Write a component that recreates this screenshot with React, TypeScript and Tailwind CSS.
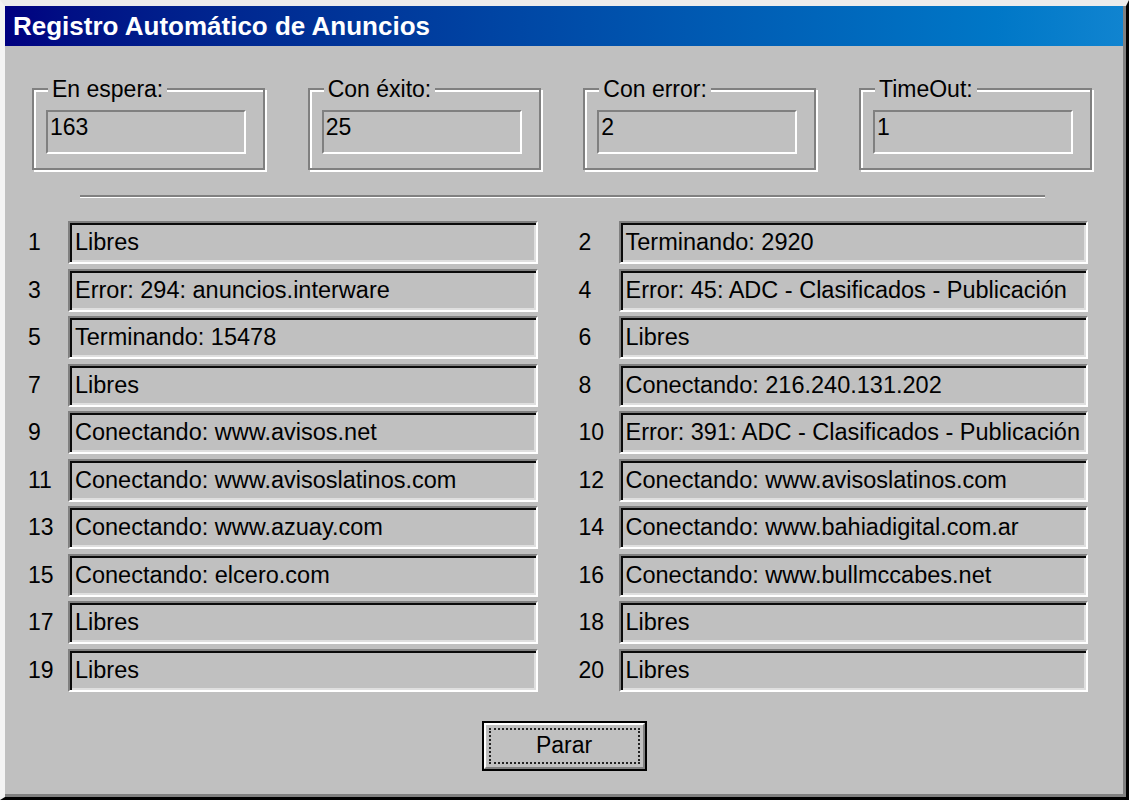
const stats = [
  { label: 'En espera:', value: '163' },
  { label: 'Con éxito:', value: '25' },
  { label: 'Con error:', value: '2' },
  { label: 'TimeOut:', value: '1' },
];

const slots = [
  'Libres',
  'Terminando: 2920',
  'Error: 294: anuncios.interware',
  'Error: 45: ADC - Clasificados - Publicación',
  'Terminando: 15478',
  'Libres',
  'Libres',
  'Conectando: 216.240.131.202',
  'Conectando: www.avisos.net',
  'Error: 391: ADC - Clasificados - Publicación',
  'Conectando: www.avisoslatinos.com',
  'Conectando: www.avisoslatinos.com',
  'Conectando: www.azuay.com',
  'Conectando: www.bahiadigital.com.ar',
  'Conectando: elcero.com',
  'Conectando: www.bullmccabes.net',
  'Libres',
  'Libres',
  'Libres',
  'Libres',
];

function StatBox({ label, value }: { label: string; value: string }) {
  return (
    <div className="relative h-[82px] w-[233px] border-2 border-[#808080] shadow-[inset_2px_2px_0_#fff,2px_2px_0_#fff]">
      {/* label sits over the etched top edge */}
      <span className="absolute -top-[14px] left-[14px] bg-[#c0c0c0] px-[4px] text-[23px] leading-[26px] text-black">
        {label}
      </span>
      <div className="ml-[12px] mt-[20px] h-[44px] w-[200px] border-2 border-t-[#808080] border-l-[#808080] border-b-white border-r-white pl-[2px] pt-[2px] text-[23px] leading-[26px] text-black">
        {value}
      </div>
    </div>
  );
}

function SlotRow({ n, text }: { n: number; text: string }) {
  return (
    <div className="flex h-[43px] items-center">
      <span className="w-[40px] shrink-0 text-[23px] leading-none text-black">{n}</span>
      <div className="flex h-full flex-1 items-center border-2 border-t-[#808080] border-l-[#808080] border-b-white border-r-white pl-[5px] pt-[1px] text-[23.5px] leading-none whitespace-nowrap text-black shadow-[inset_2px_2px_0_#0a0a0a,inset_-2px_-2px_0_#dfdfdf]">
        {text}
      </div>
    </div>
  );
}

export default function App() {
  return (
    <div
      className="h-[800px] w-[1129px] border-t-[6px] border-l-[5px] border-r-[3px] border-b-[3px] border-t-[#ececec] border-l-[#f4f4f4] border-r-black border-b-black bg-[#c0c0c0]"
      style={{ fontFamily: '"Liberation Sans", Arial, sans-serif' }}
    >
      <div className="flex h-full flex-col border-r-[3px] border-b-[3px] border-[#808080]">
        {/* Title bar */}
        <div className="flex h-[40px] shrink-0 items-center bg-gradient-to-r from-[#000080] to-[#1084d0] pl-[8px]">
          <span className="text-[26px] font-bold leading-none text-white">
            Registro Automático de Anuncios
          </span>
        </div>

        {/* Counters */}
        <div className="mt-[42px] flex justify-between pl-[27px] pr-[31px]">
          {stats.map((s) => (
            <StatBox key={s.label} label={s.label} value={s.value} />
          ))}
        </div>

        {/* Etched separator */}
        <div className="ml-[75px] mt-[25px] h-[3px] w-[965px] border-t-2 border-b border-t-[#808080] border-b-white" />

        {/* Connection slots */}
        <div className="mt-[23px] grid grid-cols-2 gap-x-[41px] gap-y-[4.5px] pl-[23px] pr-[35px]">
          {slots.map((text, i) => (
            <SlotRow key={i} n={i + 1} text={text} />
          ))}
        </div>

        {/* Button */}
        <div className="mt-[29px] flex justify-center">
          <button className="h-[50px] w-[165px] border-2 border-black bg-[#c0c0c0] p-0">
            <div className="flex h-full w-full items-center justify-center border-2 border-t-white border-l-white border-b-[#808080] border-r-[#808080] p-[3px]">
              <div className="flex h-full w-full items-center justify-center border-2 border-dotted border-[#222] text-[23px] leading-none text-black">
                Parar
              </div>
            </div>
          </button>
        </div>
      </div>
    </div>
  );
}
